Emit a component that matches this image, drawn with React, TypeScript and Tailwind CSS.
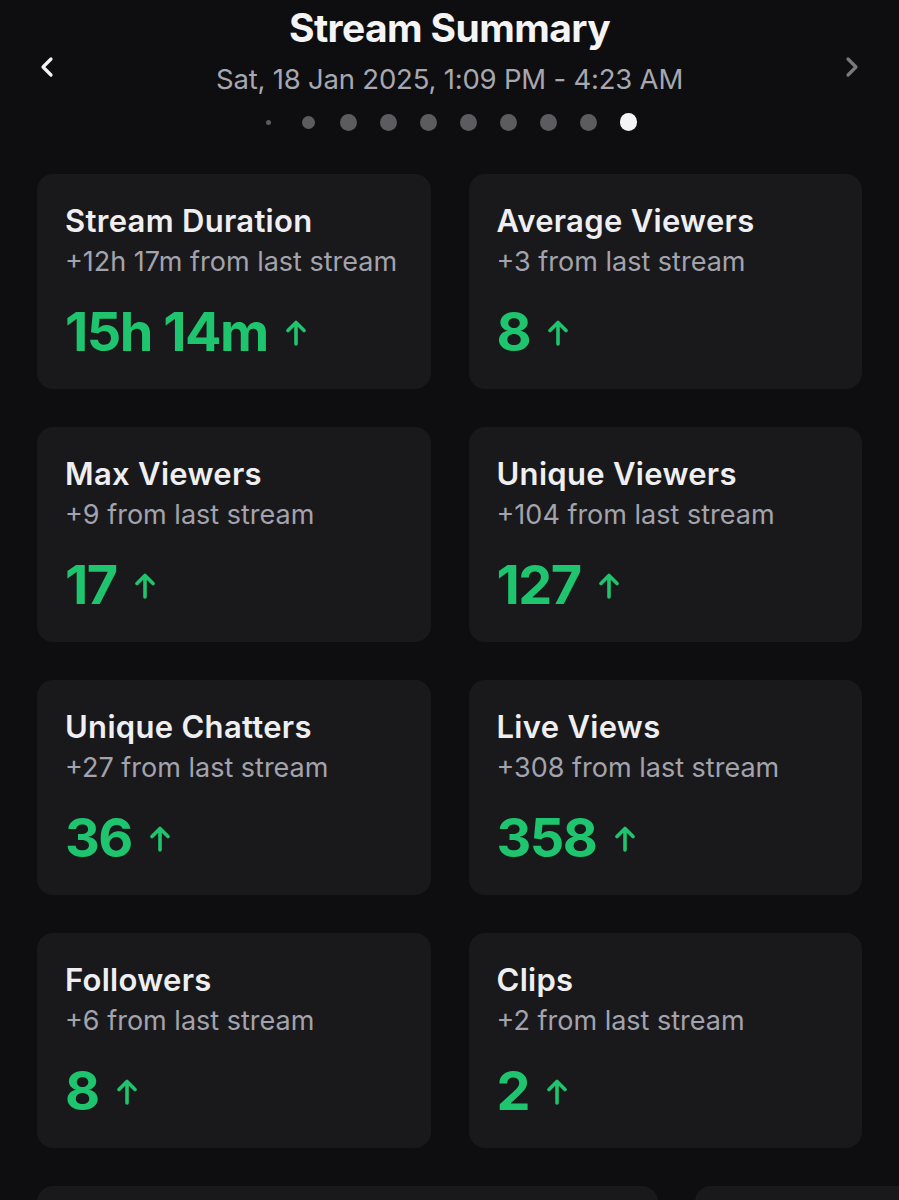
import React from "react";

type Stat = { title: string; delta: string; value: string };

const stats: Stat[] = [
  { title: "Stream Duration", delta: "+12h 17m from last stream", value: "15h 14m" },
  { title: "Average Viewers", delta: "+3 from last stream", value: "8" },
  { title: "Max Viewers", delta: "+9 from last stream", value: "17" },
  { title: "Unique Viewers", delta: "+104 from last stream", value: "127" },
  { title: "Unique Chatters", delta: "+27 from last stream", value: "36" },
  { title: "Live Views", delta: "+308 from last stream", value: "358" },
  { title: "Followers", delta: "+6 from last stream", value: "8" },
  { title: "Clips", delta: "+2 from last stream", value: "2" },
];

const ArrowUp = () => (
  <svg width="20" height="26" viewBox="0 0 20 26" fill="none" className="ml-[18px] mb-[16px]">
    <path d="M10 24V3M2 10.5L10 2.5l8 8" stroke="#1fc46e" strokeWidth="3.6" strokeLinecap="round" strokeLinejoin="round" />
  </svg>
);

const StatCard: React.FC<{ stat: Stat }> = ({ stat }) => {
  return (
    <div className="h-[215px] rounded-[16px] bg-[#19191c] pl-[28px] pt-[28px]">
      <h2 className="text-[31px] leading-[38px] font-semibold text-[#efeff1] tracking-[0.3px]">{stat.title}</h2>
      <p className="text-[27px] leading-[32px] text-[#a3a3ad] mt-[6px]">{stat.delta}</p>
      <div className="flex items-end mt-[24px]">
        <span className="text-[54px] leading-[60px] font-bold text-[#1fc46e] tracking-[-1.5px]">{stat.value}</span>
        <ArrowUp />
      </div>
    </div>
  );
};

const App: React.FC = () => {
  const dots = [5, 13, 17, 17, 17, 17, 17, 17, 17, 18];
  return (
    <div className="min-h-[1200px] h-[1200px] overflow-hidden bg-[#0e0e10]" style={{ fontFamily: "Inter, 'Noto Sans', sans-serif" }}>
      <div className="relative pt-[5px]">
        <h1 className="text-center text-[39px] leading-[46px] font-bold text-[#f4f4f5] tracking-[-0.6px]">Stream Summary</h1>
        <p className="text-center text-[27.5px] leading-[34px] text-[#a7a7b0] mt-[11px] tracking-[-0.2px]">Sat, 18 Jan 2025, 1:09 PM - 4:23 AM</p>
        <div className="flex justify-center items-center gap-[23px] mt-[16px] h-[20px] pr-[2px]">
          {dots.map((d, i) => (
            <div key={i} className="flex items-center justify-center w-[17px]">
              <div
                className={i === dots.length - 1 ? "rounded-full bg-[#f4f4f5]" : "rounded-full bg-[#5c5c60]"}
                style={{ width: d, height: d }}
              />
            </div>
          ))}
        </div>
        <svg className="absolute left-[39px] top-[56px]" width="16" height="22" viewBox="0 0 16 22" fill="none">
          <path d="M12 3L4 11l8 8" stroke="#f4f4f5" strokeWidth="3.2" strokeLinecap="round" strokeLinejoin="round" />
        </svg>
        <svg className="absolute left-[844px] top-[56px]" width="16" height="22" viewBox="0 0 16 22" fill="none">
          <path d="M4 3l8 8-8 8" stroke="#7a7a7e" strokeWidth="3.2" strokeLinecap="round" strokeLinejoin="round" />
        </svg>
      </div>

      <div className="grid grid-cols-2 gap-x-[38px] gap-y-[38px] px-[37px] mt-[42px]">
        {stats.map((s) => (
          <StatCard key={s.title} stat={s} />
        ))}
      </div>

      <div className="flex gap-[37px] pl-[37px] mt-[38px]">
        <div className="w-[621px] shrink-0 h-[215px] rounded-[16px] bg-[#19191c]" />
        <div className="w-[400px] shrink-0 h-[215px] rounded-[16px] bg-[#19191c]" />
      </div>
    </div>
  );
};

export default App;
